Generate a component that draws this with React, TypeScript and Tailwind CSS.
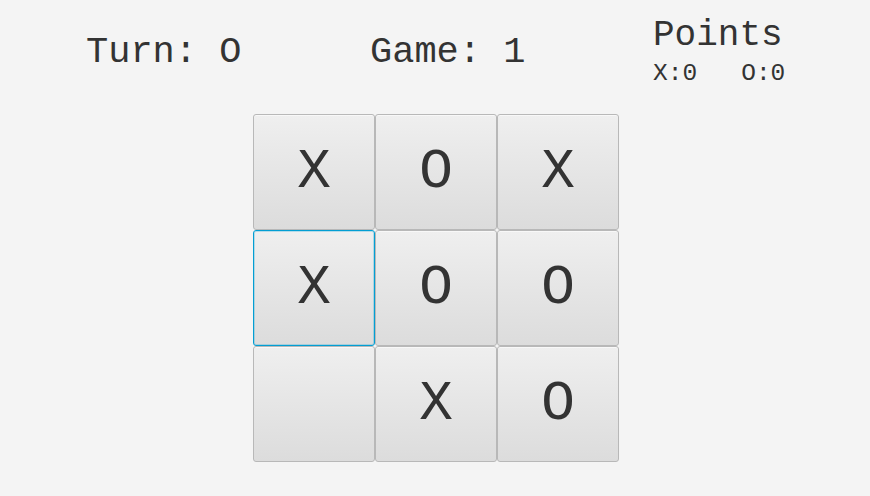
import React from "react";

const board = ["X", "O", "X", "X", "O", "O", "", "X", "O"];

export default function App() {
  return (
    <div
      className="w-[870px] h-[496px] bg-[#f4f4f4] text-[#333333] overflow-hidden"
      style={{ fontFamily: '"Liberation Mono", "Courier New", monospace' }}
    >
      <div className="flex h-[114px]">
        <div className="w-[370px] shrink-0 pl-[86px] pt-[32px] text-[37px] leading-[41px] whitespace-pre">
          Turn: O
        </div>
        <div className="w-[283px] shrink-0 pt-[32px] text-[37px] leading-[41px] whitespace-pre">
          Game: 1
        </div>
        <div className="flex flex-col pt-[16px]">
          <div className="text-[36px] leading-[40px] whitespace-pre">Points</div>
          <div className="mt-[4px] text-[24.5px] leading-[27px] whitespace-pre">X:0   O:0</div>
        </div>
      </div>
      <div className="ml-[253px] grid grid-cols-[repeat(3,122px)] grid-rows-[repeat(3,116px)]">
        {board.map((v, i) => (
          <div
            key={i}
            className={
              i === 3
                ? "flex items-center justify-center rounded-[3px] border border-[#039ed3] bg-gradient-to-b from-[#efefef] to-[#dcdcdc] text-[56px] leading-none shadow-[inset_0_0_0_1px_rgba(3,158,211,0.25)]"
                : "flex items-center justify-center rounded-[3px] border border-[#b8b8b8] bg-gradient-to-b from-[#efefef] to-[#dcdcdc] text-[56px] leading-none shadow-[inset_0_1px_0_#f8f8f8]"
            }
          >
            {v}
          </div>
        ))}
      </div>
    </div>
  );
}
